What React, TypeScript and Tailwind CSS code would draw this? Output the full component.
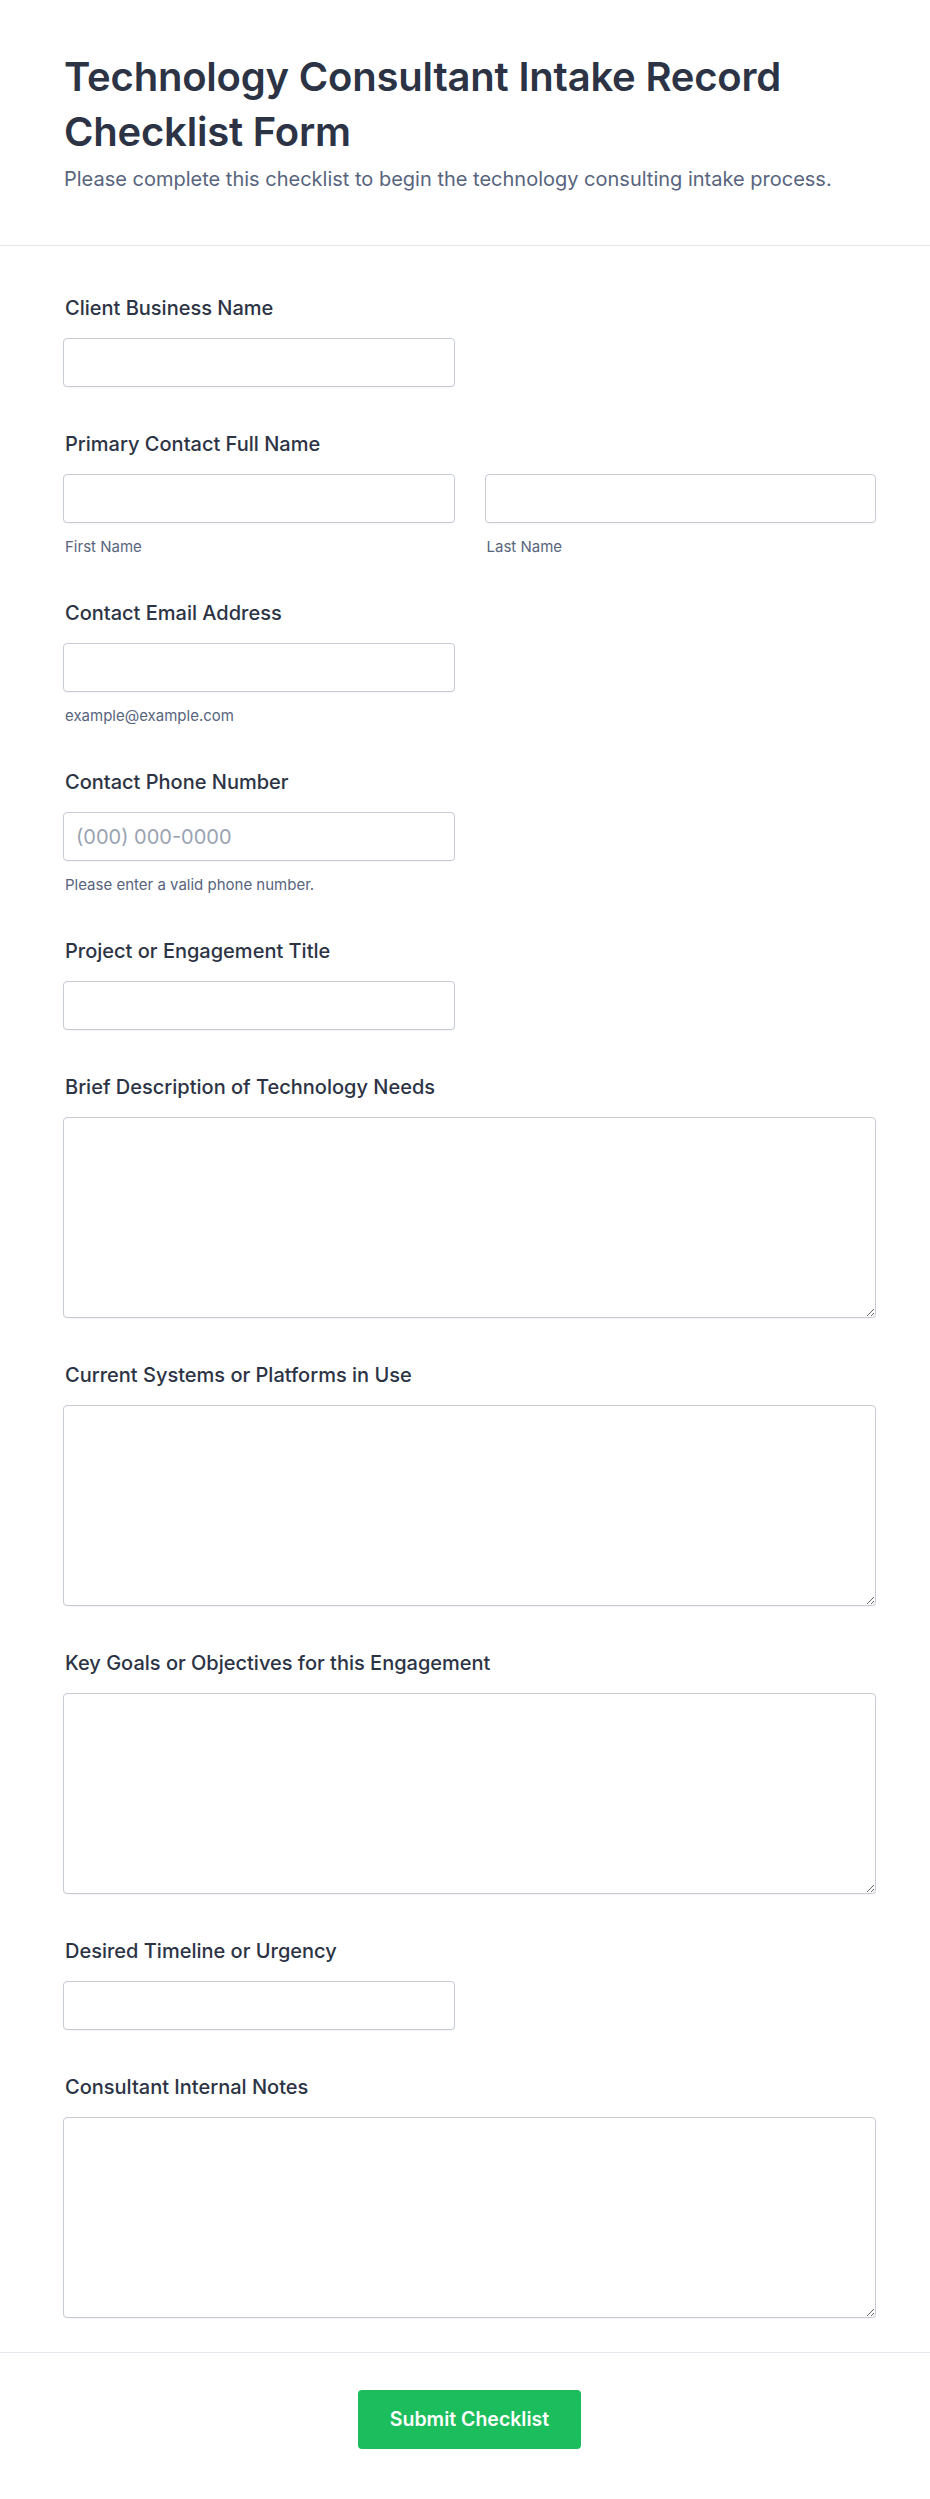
import type { ReactNode } from 'react'

const font = { fontFamily: 'Inter, "Noto Sans", sans-serif' }

function Label({ children }: { children: ReactNode }) {
  return (
    <label className="block h-6 mb-[18px] pl-[2px] text-[20px] leading-6 font-medium text-[#2c3345]">
      {children}
    </label>
  )
}

function Hint({ children }: { children: ReactNode }) {
  return <p className="mt-[14px] -mb-[1px] pl-[2px] text-[15px] leading-5 text-[#57647e]">{children}</p>
}

const inputCls =
  'block w-full h-[49px] px-3 rounded-[4px] border border-[#c6cbd6] bg-white text-[20px] text-[#2c3345] placeholder:text-[#9aa3b2] shadow-[0_1px_1px_rgba(0,0,0,0.04)] outline-none'

const areaCls =
  'block w-full h-[201px] px-3 py-2.5 rounded-[4px] border border-[#c6cbd6] bg-white text-[20px] text-[#2c3345] shadow-[0_1px_1px_rgba(0,0,0,0.04)] outline-none'

function HalfInput({ placeholder }: { placeholder?: string }) {
  return (
    <div className="grid grid-cols-2 gap-[30px]">
      <input className={inputCls} placeholder={placeholder} />
    </div>
  )
}

export default function App() {
  return (
    <div className="min-h-[2499px] bg-white" style={font}>
      <header className="pt-[49px] pb-[52px] pl-[64px] pr-[54px] border-b border-[#e3e5ea]">
        <h1 className="text-[40px] leading-[55px] font-semibold text-[#2c3345] tracking-[-0.2px]">
          Technology Consultant Intake Record Checklist Form
        </h1>
        <p className="mt-1.5 text-[20px] leading-7 text-[#57647e]">
          Please complete this checklist to begin the technology consulting intake process.
        </p>
      </header>

      <form className="pt-[50px] pb-[34px] pl-[63px] pr-[54px] flex flex-col gap-[45px]">
        <div>
          <Label>Client Business Name</Label>
          <HalfInput />
        </div>

        <div>
          <Label>Primary Contact Full Name</Label>
          <div className="grid grid-cols-2 gap-[30px]">
            <div>
              <input className={inputCls} />
              <Hint>First Name</Hint>
            </div>
            <div>
              <input className={inputCls} />
              <Hint>Last Name</Hint>
            </div>
          </div>
        </div>

        <div>
          <Label>Contact Email Address</Label>
          <HalfInput />
          <Hint>example@example.com</Hint>
        </div>

        <div>
          <Label>Contact Phone Number</Label>
          <HalfInput placeholder="(000) 000-0000" />
          <Hint>Please enter a valid phone number.</Hint>
        </div>

        <div>
          <Label>Project or Engagement Title</Label>
          <HalfInput />
        </div>

        <div>
          <Label>Brief Description of Technology Needs</Label>
          <textarea className={areaCls} />
        </div>

        <div>
          <Label>Current Systems or Platforms in Use</Label>
          <textarea className={areaCls} />
        </div>

        <div>
          <Label>Key Goals or Objectives for this Engagement</Label>
          <textarea className={areaCls} />
        </div>

        <div>
          <Label>Desired Timeline or Urgency</Label>
          <HalfInput />
        </div>

        <div>
          <Label>Consultant Internal Notes</Label>
          <textarea className={areaCls} />
        </div>
      </form>

      <footer className="border-t border-[#e9eaf0] pt-[37px] pb-[50px] pl-[63px] pr-[54px] flex justify-center">
        <button
          type="button"
          className="h-[59px] w-[223px] rounded-[4px] bg-[#1bbd5c] text-white text-[19.5px] font-semibold"
        >
          Submit Checklist
        </button>
      </footer>
    </div>
  )
}
